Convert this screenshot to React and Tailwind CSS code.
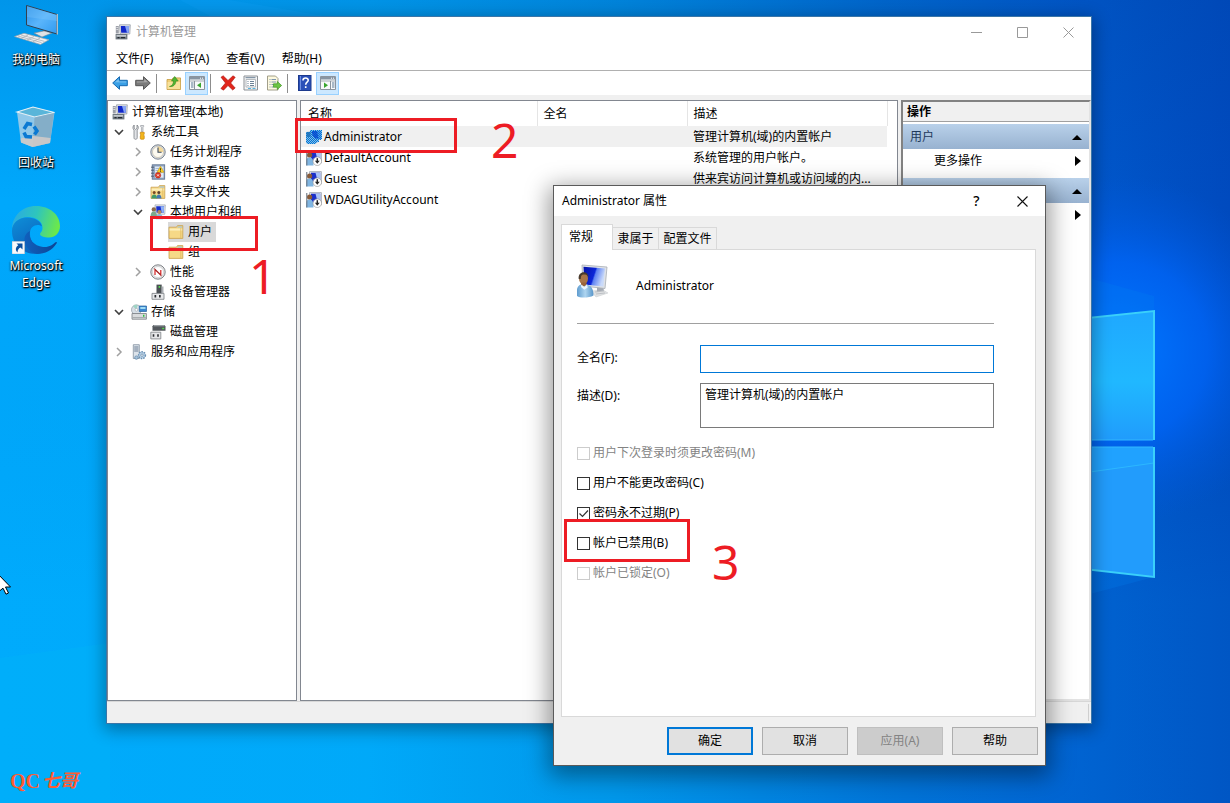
import React from "react";

/* ---------- icons ---------- */

const Svg = ({ size = 16, children, className = "" }) => (
  <svg width={size} height={size} viewBox="0 0 16 16" className={`shrink-0 ${className}`} aria-hidden="true">
    {children}
  </svg>
);

const ComputerIcon = () => (
  <Svg>
    <path d="M4.500 .8h10.800l-.5 9.200H5.200z" fill="#e4e6ea" stroke="#8d939c" strokeWidth=".7" />
    <path d="M5.800 2h8.300l-.4 6.800H6.200z" fill="#1228c8" />
    <path d="M10 2h4.100l-.4 6.800h-1.700z" fill="#86a4f4" />
    <path d="M.8 2h3v7.500h-3z" fill="#9b9fa8" />
    <path d="M1.300 3.500h2M1.300 5.500h2" stroke="#e9eaec" strokeWidth=".8" />
    <path d="M.6 10h11.800v5.400H.6z" fill="#6f7880" />
    <path d="M1.500 11.300h9.500v1.200H1.500z" fill="#e7ebee" />
    <path d="M2.500 13.600h2M6 13.600h4" stroke="#252a30" strokeWidth="1.200" />
  </Svg>
);

const ToolsIcon = () => (
  <Svg>
    <path d="M3.200 1v3.200L4.600 5.500 6 4.200V1c1.600 1 1.900 3.600.2 5.100v7.700c0 2-3.200 2-3.200 0V6.100C1.400 4.600 1.700 2 3.200 1z" fill="#e2e4e7" stroke="#7c8087" strokeWidth=".8" />
    <path d="M9.600 1.500h3v1.200l-.6.800v4.200h-1.600V3.500l-.8-.8z" fill="#dadde0" stroke="#8b8f95" strokeWidth=".6" />
    <path d="M9.300 8.300h3.900v1.800l-.6.800.6 1v2.800c0 .8-3.900.8-3.900 0v-2.800l.6-1-.6-.8z" fill="#f2b61c" stroke="#c98205" strokeWidth=".7" />
  </Svg>
);

const ClockIcon = () => (
  <Svg>
    <circle cx="8" cy="8" r="7.200" fill="#d4dae2" stroke="#7c848e" />
    <circle cx="8" cy="8" r="5.500" fill="#fdfaf0" stroke="#b4a98c" strokeWidth=".5" />
    <path d="M8 2.600A5.400 5.400 0 0 1 13.400 8H8z" fill="#f3d99a" />
    <path d="M8 3.500V8.300h3.600" fill="none" stroke="#39485b" strokeWidth="1.100" />
  </Svg>
);

const EventIcon = () => (
  <Svg>
    <rect x="2.200" y=".8" width="12.500" height="14.400" fill="#91a6c2" stroke="#5a6f8e" strokeWidth=".8" />
    <path d="M5 2.500h8.500v11.200H5z" fill="#dfe9f5" />
    <path d="M5.500 4.500h7M5.500 6.500h7M5.500 8.500h7" stroke="#8ba5c7" strokeWidth=".7" />
    <path d="M1 3.200h3M1 6.200h3M1 9.200h3M1 12.200h3" stroke="#4b5668" strokeWidth=".9" />
    <path d="m10.500 2.300 3.500 6H7z" fill="#ffd21f" stroke="#b88a00" strokeWidth=".5" />
    <path d="M10.500 4.200v2.400M10.500 7v.8" stroke="#222" strokeWidth=".8" />
    <circle cx="8" cy="11.300" r="2.800" fill="#dc3a26" stroke="#a31b0e" strokeWidth=".4" />
    <path d="m7 10.300 2 2m0-2-2 2" stroke="#fff" strokeWidth=".8" />
  </Svg>
);

const FolderShape = () => (
  <>
    <path d="M1 3.200h7.500l1-1.600h5.300v12.800H1z" fill="#f6d987" stroke="#c99f4c" strokeWidth=".8" />
    <path d="M9.800 2.400h4.300v1.200H9.200z" fill="#8ebce8" />
    <path d="M1.600 4.600h12.600v2H1.600z" fill="#fceebb" />
    <path d="M12.800 4v10" stroke="#dfb962" strokeWidth=".8" />
  </>
);

const FolderIcon = () => (
  <Svg>
    <FolderShape />
  </Svg>
);

const SharedIcon = () => (
  <Svg>
    <FolderShape />
    <circle cx="4.200" cy="8.600" r="1.500" fill="#7b4a25" />
    <path d="M1.400 14.400c.2-3 1-4 2.800-4s2.700 1 2.800 4z" fill="#3f9a6a" />
    <circle cx="8.800" cy="8.600" r="1.500" fill="#594130" />
    <path d="M6.500 14.400c.1-3 .7-4 2.300-4s2.500 1 2.700 4z" fill="#4378b3" />
  </Svg>
);

const UsersIcon = () => (
  <Svg>
    <path d="M5 .9h10.300l-.5 9.300H5.400z" fill="#e8ebef" stroke="#9ba2ac" strokeWidth=".7" />
    <path d="M6.200 2.200h7.900l-.4 6.600H6.500z" fill="#1630cf" />
    <path d="M10.500 2.200h3.600l-.4 6.600h-2z" fill="#8fb0f6" />
    <circle cx="3.800" cy="5.400" r="2.200" fill="#8b6a4c" />
    <path d="M.4 13.200c.3-4 1.300-5.600 3.400-5.600s3 1.800 3.400 5.600z" fill="#7ba98c" />
    <circle cx="9.400" cy="8" r="2.100" fill="#b88a5b" />
    <path d="M5.900 15.200c.3-3.600 1.200-5.200 3.500-5.200s3.300 1.600 3.600 5.200z" fill="#86b9dc" />
  </Svg>
);

const PerfIcon = () => (
  <Svg>
    <circle cx="8" cy="8" r="7.200" fill="#e6e6e6" stroke="#7f8388" strokeWidth="1" />
    <circle cx="8" cy="8" r="5.500" fill="#fff" stroke="#b4b7bb" strokeWidth=".5" />
    <path d="M5 11V5.500L10.800 11V6" fill="none" stroke="#d11f1f" strokeWidth="1.200" />
    <path d="m4.300 4.500 6.800 7" stroke="#5d3f42" strokeWidth=".6" />
  </Svg>
);

const DeviceIcon = () => (
  <Svg>
    <path d="M6.500.6h5.200v9H6.500z" fill="#4b5055" />
    <path d="M8.600 2h1.600v1.800H8.600z" fill="#56dd4f" />
    <path d="M2 9.400h12v5.900H2z" fill="#e7e8ea" stroke="#7a7e83" strokeWidth=".8" />
    <path d="M4.500 11h1.700v2.500H4.500zM9 11h1.700v2.500H9z" fill="#2d3034" />
    <path d="M11.700 2.500h1.800v6.500h-1.800z" fill="#abafb4" />
  </Svg>
);

const StorageIcon = () => (
  <Svg>
    <circle cx="5.400" cy="5.800" r="4.900" fill="#d7dfe6" stroke="#8e979f" strokeWidth=".7" />
    <path d="M5.400 5.800 2 2.300A4.900 4.900 0 0 1 6.500 1z" fill="#9fd5c4" />
    <circle cx="5.400" cy="5.800" r="1.400" fill="#fff" stroke="#8e979f" strokeWidth=".5" />
    <path d="M8.300 2h7.200v5.500H8.300z" fill="#3b87cf" stroke="#28629f" strokeWidth=".7" />
    <path d="M9.300 3h5.200v2H9.300z" fill="#9edaf5" />
    <path d="M1 9.500h14.400v5.700H1z" fill="#d9dbdd" stroke="#777b80" strokeWidth=".8" />
    <path d="M1.500 13.500h13.400" stroke="#9da1a5" strokeWidth=".8" />
    <path d="M12 10.700h1.400v2H12z" fill="#2bc23b" />
  </Svg>
);

const DiskIcon = () => (
  <Svg>
    <path d="m2.500 2.300 1-1.300h10.800l1.200 1.500v4.300H2.500z" fill="#53585d" />
    <path d="M3.500 2.300h11.200L14 1.300H4.200z" fill="#b3b8bc" />
    <path d="M12.200 3.800h2v1.400h-2z" fill="#52d94b" />
    <path d="M.8 8.200h10v6.700h-10z" fill="#e5e6e8" stroke="#7b7f84" strokeWidth=".8" />
    <path d="M2.700 10.300h1.600v2.400H2.700zM7.200 10.300h1.600v2.400H7.200z" fill="#2d3034" />
  </Svg>
);

const ServicesIcon = () => (
  <Svg>
    <path d="M2.300.7h6v13.800h-6z" fill="#dce3ea" stroke="#8390a0" strokeWidth=".8" />
    <path d="M3.200 3h4.200M3.200 5h4.200M3.200 7h4.200" stroke="#6d7f95" strokeWidth="1" />
    <circle cx="11" cy="11.200" r="3.400" fill="#b9d2e8" stroke="#6a8fb1" strokeWidth="1.500" strokeDasharray="1.500 1" />
    <circle cx="11" cy="11.200" r="1.200" fill="#fff" stroke="#5a7f9f" strokeWidth=".7" />
    <circle cx="5.400" cy="13.600" r="1.700" fill="#a6c3dc" stroke="#6a8fb1" strokeWidth=".8" />
  </Svg>
);

const UserArrowIcon = () => (
  <Svg>
    <path d="M3.500.6h11.900v12H4z" fill="#e6e9ee" stroke="#8f98a6" strokeWidth=".7" />
    <path d="M5 1.700h9.200v9H5z" fill="#1b2fca" />
    <path d="M9.500 1.700h4.700v9h-2.500z" fill="#a9c2f7" />
    <circle cx="3.600" cy="5" r="2.600" fill="#8a5b38" />
    <path d="M.3 15.400V11c0-2.500 1.400-3.400 3.500-3.400s3.700 1.300 3.700 7.800z" fill="#7fb5e2" />
    <path d="M.3 1h1v14.400h-1z" fill="#5f6a78" />
    <circle cx="11.300" cy="11.200" r="4.300" fill="#fff" stroke="#8c8c8c" strokeWidth=".6" />
    <path d="M11.300 8.200v3.500" stroke="#222" strokeWidth="1.500" />
    <path d="M8.900 10.800h4.800l-2.400 3z" fill="#222" />
  </Svg>
);

const UserSelectedIcon = () => (
  <Svg>
    <defs>
      <pattern id="dither" width="2" height="2" patternUnits="userSpaceOnUse">
        <rect width="1" height="1" fill="#0078d7" />
        <rect x="1" y="1" width="1" height="1" fill="#0078d7" />
      </pattern>
    </defs>
    <path d="M4 1h12v9l-3 1v1.500l-4 2.500H1.500L0 14V3l4-.5z" fill="#85bce8" />
    <path d="M6 2h9v7.500H9L6 5z" fill="#1937cf" />
    <path d="M11 2h4v7.500h-2.500z" fill="#5795ea" />
    <path d="M.5 3h4v5h-4z" fill="#4277a8" />
    <path d="M4 1h12v9l-3 1v1.500l-4 2.500H1.500L0 14V3l4-.5z" fill="url(#dither)" shapeRendering="crispEdges" />
  </Svg>
);

const UserLargeIcon = () => (
  <svg width="32" height="36" viewBox="0 0 32 36" className="shrink-0" aria-hidden="true">
    <defs>
      <linearGradient id="scr" x1="0" x2="1" y1="0" y2=".3">
        <stop offset="0" stopColor="#0412a8" />
        <stop offset=".55" stopColor="#0c26d8" />
        <stop offset=".62" stopColor="#5f82f2" />
        <stop offset="1" stopColor="#c9dafa" />
      </linearGradient>
      <linearGradient id="shirt" x1="0" x2="1">
        <stop offset="0" stopColor="#5f9ccf" />
        <stop offset=".5" stopColor="#aed5f0" />
        <stop offset="1" stopColor="#5795c9" />
      </linearGradient>
    </defs>
    <path d="m14 27 12-1 5 3-12 4z" fill="#dfe1e3" stroke="#c6cacd" strokeWidth=".5" />
    <path d="m18 28 9-1M19 30l9-1" stroke="#aeb2b7" strokeWidth=".7" />
    <path d="m20 22 6 1 1 3.500-7 1z" fill="#a5abb4" />
    <path d="m5 1 25 2-2 21.500L6 22z" fill="#dfe2e7" stroke="#a7adb5" strokeWidth=".8" />
    <path d="m6.500 2.800 21.500 1.800-1.700 17.900L7.500 20.500z" fill="url(#scr)" />
    <ellipse cx="6.500" cy="14.500" rx="4.500" ry="5.700" fill="#a87548" />
    <path d="M1.700 15c-1-8.500 9.800-8.800 9.800-1.500-1-2.500-2.500-3-4.700-3-2 0-3 1-3 4.500z" fill="#493a2d" />
    <path d="M4 18.500h5.500v4H4z" fill="#9a6539" />
    <path d="M0 32v-5.500c0-4 2.500-5.500 4-6l3 2.500 2.600-2.500c4.500 1 6.900 4 6.900 11C12 34 3 34.200 0 32z" fill="url(#shirt)" />
    <path d="m4.300 20.500 3 2.500 2.600-2.500.8 3-3.400 2.300-3.300-2.800z" fill="#eaf5fc" />
  </svg>
);

/* ---------- desktop ---------- */

const PcDesktopIcon = () => (
  <svg width="48" height="48" viewBox="0 0 48 48" aria-hidden="true">
    <defs>
      <linearGradient id="pc" x1="0" x2="1" y1="0" y2="1">
        <stop offset="0" stopColor="#2a8fe6" />
        <stop offset=".5" stopColor="#5bb5fb" />
        <stop offset="1" stopColor="#2f9af0" />
      </linearGradient>
    </defs>
    <path d="m31 31 4-1v4h-5z" fill="#b9bec4" />
    <path d="m22 33 10-2 8 2-10 4z" fill="#dfe3e6" stroke="#7d8790" strokeWidth=".6" />
    <path d="m14.500 5.500 30.500 9V34l-30.500-9z" fill="url(#pc)" stroke="#32404f" strokeWidth="1" />
    <path d="M15 6 45 15v6L15 17z" fill="#7cc6fb" opacity=".35" />
    <path d="M45.300 14V34.500" stroke="#c3c9cf" strokeWidth="1.200" />
    <path d="m2.500 36.500 9.500-3.200 25 6.500-8.500 4.700z" fill="#eef0f2" stroke="#98a1a8" strokeWidth=".7" />
    <path d="m6 36 23.500 6.600M9 35l23.500 6.400M9 38.400l7-3.400M15 40l7-3.500M21 41.700l7-3.600" stroke="#a9b0b6" strokeWidth=".8" />
  </svg>
);

const BinIcon = () => (
  <svg width="48" height="48" viewBox="0 0 48 48" aria-hidden="true">
    <path d="m5 9 16-5 21.500 5.500L38 40l-17.500 4L9 39.500z" fill="#a9cfe6" fillOpacity=".85" />
    <path d="m5 9 16-5 21.500 5.500L22.500 14z" fill="#59b5d9" stroke="#e4eff5" strokeWidth="1.200" />
    <path d="M22.500 14.500 42 10 38 40l-17.500 4z" fill="#83a9c2" fillOpacity=".85" />
    <path d="m8.500 35.500 13-2.500 17 2-.5 5-17.500 4L9 39.500z" fill="#cfcac8" fillOpacity=".9" />
    <g fill="none" stroke="#0b79d2" strokeWidth="3.500">
      <path d="m12 26 3.500-5.500 4.500 1" />
      <path d="m22 23.500 3 4.500-2.500 3.500" />
      <path d="m20 34-6-.5-2-4" />
    </g>
  </svg>
);

const EdgeIcon = () => (
  <svg width="48" height="48" viewBox="0 0 48 48" aria-hidden="true">
    <defs>
      <linearGradient id="e1" x1="0" x2="1" y1=".2" y2=".4">
        <stop offset="0" stopColor="#2aa9e5" />
        <stop offset=".5" stopColor="#2ec5bd" />
        <stop offset="1" stopColor="#6be84c" />
      </linearGradient>
      <linearGradient id="e2" x1="0" x2=".5" y1="0" y2="1">
        <stop offset="0" stopColor="#0e8fd8" />
        <stop offset="1" stopColor="#0b63bd" />
      </linearGradient>
      <linearGradient id="e3" x1="0" x2="1">
        <stop offset="0" stopColor="#1060bd" />
        <stop offset="1" stopColor="#0d4595" />
      </linearGradient>
    </defs>
    <path d="M0 24C0 10 10 0 24 0s24 9 24 20c0 7-5 11.500-11 11.500-5 0-9-1.400-9-3.500 0-1 2.500-2.500 2.500-6C30.500 15 24 11 16 11 8 11 2 16 0 24z" fill="url(#e1)" />
    <path d="M0 25c0-8 6.500-13.500 15-13.500 8.500 0 14 4 15 9-5-3.500-11.500-.5-12 6C17.500 34 22 42 31 46.500 17 51.500 0 42 0 25z" fill="url(#e2)" />
    <path d="M18 25c-2 8 4 15 13 16 6 .6 10-2.500 12-4.500 1.500-1.200 2.300-.3 1.500 1C40.500 44 33 48 25 48c-6-1-12-7-12.500-13.500-.4-4.500 2-8 5.500-9.500z" fill="url(#e3)" />
    <path d="M0 35.500h12.500V48H0z" fill="#f7f9fb" stroke="#b7c5d3" strokeWidth=".8" />
    <path d="m4.500 37.500 6 0v6l-2-2c-2 1-3 2.500-3 5-2.500-2.500-2-5.500.8-7.300z" fill="#0b4f9e" />
  </svg>
);

const DesktopItem = ({ icon, label }) => (
  <button className="flex w-[72px] flex-col items-center gap-[3px] text-xs leading-[17px] text-white [text-shadow:1px_1px_1px_#000,0_1px_2px_#000,1px_0_2px_#00000099]">
    {icon}
    <span>{label}</span>
  </button>
);

const Wallpaper = () => (
  <svg className="absolute inset-0 h-full w-full" viewBox="0 0 1230 803" preserveAspectRatio="none" aria-hidden="true">
    <defs>
      <linearGradient id="base" x1="0" x2="1" y1="0" y2="0">
        <stop offset="0" stopColor="#00a8fc" />
        <stop offset=".3" stopColor="#00a6f8" />
        <stop offset=".5" stopColor="#0092e8" />
        <stop offset=".72" stopColor="#006cd4" />
        <stop offset=".88" stopColor="#0058cc" />
        <stop offset="1" stopColor="#004abe" />
      </linearGradient>
      <linearGradient id="shade" x1="0" x2="0" y1="0" y2="1">
        <stop offset="0" stopColor="#004098" stopOpacity=".18" />
        <stop offset=".25" stopColor="#004098" stopOpacity="0" />
        <stop offset=".75" stopColor="#00c4ff" stopOpacity=".1" />
        <stop offset="1" stopColor="#00c4ff" stopOpacity=".1" />
      </linearGradient>
      <radialGradient id="glow" gradientUnits="userSpaceOnUse" cx="1120" cy="350" r="175">
        <stop offset="0" stopColor="#0078ff" />
        <stop offset=".5" stopColor="#0068ff" stopOpacity=".7" />
        <stop offset="1" stopColor="#0058e0" stopOpacity="0" />
      </radialGradient>
      <linearGradient id="pane" x1="0" x2="0" y1="0" y2="1">
        <stop offset="0" stopColor="#1fa8ff" />
        <stop offset=".55" stopColor="#20b8ff" />
        <stop offset="1" stopColor="#209cfc" />
      </linearGradient>
    </defs>
    <rect width="1230" height="803" fill="url(#base)" />
    <rect width="1230" height="803" fill="url(#shade)" />
    <path d="M230 0 700 80H330L180 0z" fill="#20a8ff" opacity=".15" />
    <path d="M0 658 110 643V803H0z" fill="#00b4f8" opacity=".4" />
    <rect x="900" y="130" width="330" height="440" fill="url(#glow)" />
    <path d="m1060 270 94 26v14l-94 10zM1060 550l94 27-94 25z" fill="#0080f0" opacity=".25" />
    <path d="M1040 323 1154 311V440H1040z" fill="url(#pane)" />
    <path d="M1040 447h114v130l-114-13z" fill="#229cfc" />
    <path d="m1040 479 114-16v-16h-114z" fill="#20a2ff" />
    <path d="m1040 479 114-16" stroke="#2cb8ff" />
    <path d="m1040 323 114-12v129M1154 447v130l-114-13" fill="none" stroke="#3ad0fa" strokeWidth="2" />
    <path d="M1040 440h113M1040 447h113" stroke="#30b8ff" />
  </svg>
);

/* ---------- main window ---------- */

const Chevron = ({ open }) => (
  <button className="flex h-4 w-4 shrink-0 items-center justify-center" aria-label={open ? "折叠" : "展开"}>
    <svg width="10" height="10" viewBox="0 0 10 10" aria-hidden="true">
      {open ? (
        <path d="m1 3 4 4 4-4" fill="none" stroke="#404040" strokeWidth="1.600" />
      ) : (
        <path d="m3 1 4 4-4 4" fill="none" stroke="#a0a0a0" strokeWidth="1.500" />
      )}
    </svg>
  </button>
);

const indents = ["pl-1", "pl-[3px]", "pl-[22px]", "pl-10"];

const treeRows = [
  { level: 0, icon: <ComputerIcon />, text: "计算机管理(本地)", root: true },
  { level: 1, icon: <ToolsIcon />, text: "系统工具", open: true },
  { level: 2, icon: <ClockIcon />, text: "任务计划程序", open: false },
  { level: 2, icon: <EventIcon />, text: "事件查看器", open: false },
  { level: 2, icon: <SharedIcon />, text: "共享文件夹", open: false },
  { level: 2, icon: <UsersIcon />, text: "本地用户和组", open: true },
  { level: 3, icon: <FolderIcon />, text: "用户", selected: true },
  { level: 3, icon: <FolderIcon />, text: "组" },
  { level: 2, icon: <PerfIcon />, text: "性能", open: false },
  { level: 2, icon: <DeviceIcon />, text: "设备管理器" },
  { level: 1, icon: <StorageIcon />, text: "存储", open: true },
  { level: 2, icon: <DiskIcon />, text: "磁盘管理" },
  { level: 1, icon: <ServicesIcon />, text: "服务和应用程序", open: false },
];

const Tree = () => (
  <ul role="tree" className="w-[190px] shrink-0 border border-[#828790] bg-white pt-px">
    {treeRows.map((row) => (
      <li
        key={row.text}
        role="treeitem"
        aria-selected={Boolean(row.selected)}
        className={`flex h-5 items-center ${indents[row.level]}`}
      >
        {row.open !== undefined && <Chevron open={row.open} />}
        {row.open === undefined && !row.root && <span className="w-4 shrink-0" />}
        <span className={`flex h-5 items-center gap-1 pr-1 ${row.root ? "" : "ml-1"} ${row.selected ? "bg-[#d9d9d9]" : ""}`}>
          {row.icon}
          <span className="whitespace-nowrap">{row.text}</span>
        </span>
      </li>
    ))}
  </ul>
);

const accounts = [
  { name: "Administrator", desc: "管理计算机(域)的内置帐户", selected: true },
  { name: "DefaultAccount", desc: "系统管理的用户帐户。" },
  { name: "Guest", desc: "供来宾访问计算机或访问域的内..." },
  { name: "WDAGUtilityAccount", desc: "" },
];

const AccountList = () => (
  <div className="min-w-0 flex-1 border border-[#828790] bg-white">
    <table className="w-[586px] table-fixed border-collapse text-left">
      <thead>
        <tr className="h-[25px]">
          <th className="w-[236px] border-r border-[#e5e5e5] pl-[7px] font-normal">名称</th>
          <th className="w-[150px] border-r border-[#e5e5e5] pl-[6px] font-normal">全名</th>
          <th className="w-[200px] border-r border-[#e5e5e5] pl-[6px] font-normal">描述</th>
        </tr>
      </thead>
      <tbody>
        {accounts.map((a) => (
          <tr key={a.name} className={`h-[21px] ${a.selected ? "bg-[#f0f0f0]" : ""}`}>
            <td className="p-0 pl-[5px]">
              <span className="flex items-center gap-[2px]">
                {a.selected ? <UserSelectedIcon /> : <UserArrowIcon />}
                {a.name}
              </span>
            </td>
            <td className="p-0" />
            <td className="whitespace-nowrap p-0 pl-[6px]">{a.desc}</td>
          </tr>
        ))}
      </tbody>
    </table>
  </div>
);

const Triangle = ({ dir }) => (
  <svg width="10" height="10" viewBox="0 0 10 10" aria-hidden="true">
    {dir === "up" ? <path d="m0 8 5-5 5 5z" fill="#000" /> : <path d="m2 0 6 5-6 5z" fill="#000" />}
  </svg>
);

const ActionHeading = ({ children }) => (
  <button className="flex h-[25px] w-full items-center justify-between bg-linear-to-b from-[#b9d1ea] to-[#98b2d0] pl-[7px] pr-[7px] text-[#1e395b]">
    {children}
    <Triangle dir="up" />
  </button>
);

const ActionLink = () => (
  <button className="flex h-[23px] w-full items-center justify-between pl-[31px] pr-[6px]">
    更多操作
    <Triangle dir="right" />
  </button>
);

const Actions = () => (
  <aside className="flex w-[190px] shrink-0 flex-col border-2 border-r-[#e3e3e3] border-b-[#e3e3e3] border-l-[#828282] border-t-[#828282] bg-white">
    <h2 className="h-5 border-b border-[#a0a0a0] bg-[#f0f0f0] pl-1 font-bold leading-[20px]">操作</h2>
    <div className="mt-[2px] flex flex-col">
      <ActionHeading>用户</ActionHeading>
      <ActionLink />
      <div className="mt-[6px]">
        <ActionHeading>Administrator</ActionHeading>
        <ActionLink />
      </div>
    </div>
  </aside>
);

const ToolButton = ({ label, active, children }) => (
  <button
    aria-label={label}
    className={`flex h-[23px] w-[23px] items-center justify-center ${active ? "border border-[#99d1ff] bg-[#cce8ff]" : ""}`}
  >
    {children}
  </button>
);

const Divider = () => <span className="ml-[2px] mr-[5px] h-[19px] w-px bg-[#8d8d8d]" />;

const Arrow = ({ flip, fill, stroke }) => (
  <Svg className={flip ? "-scale-x-100" : ""}>
    <path d="M.7 8 7.500 1.700v3.600h7.800v5.400H7.500v3.600z" fill={fill} stroke={stroke} strokeWidth="1" />
    <path d="M3 7.300 6.800 4v2.500h7.400v1z" fill="#fff" opacity=".35" />
  </Svg>
);

const PaneIcon = ({ right }) => (
  <Svg>
    <path d="M.5 1.500h15v13H.5z" fill="#f7f9fa" stroke="#8b949d" />
    <path d="M1 2h14v2.500H1z" fill="#8795a3" />
    <path d="M11 3.200h1M13 3.200h1" stroke="#fff" />
    <path d="M1 6h14" stroke="#a5adb5" />
    {right ? (
      <>
        <path d="M10.500 6v8" stroke="#8b949d" />
        <path d="M12 8h2.500M12 10h2.500M12 12h2.500" stroke="#5b7894" />
        <path d="m4 7.500 4 2.700-4 2.700z" fill="#3aa62e" />
      </>
    ) : (
      <>
        <path d="M5.500 6v8" stroke="#8b949d" />
        <path d="M2 8h2.500M2 10h2.500M2 12h2.500" stroke="#5b7894" />
        <path d="m12 7.500-4 2.700 4 2.700z" fill="#3aa62e" />
      </>
    )}
  </Svg>
);

const Toolbar = () => (
  <div className="flex h-[25px] items-center border-t border-[#b0b0b0] bg-white pl-px">
    <ToolButton label="后退"><Arrow fill="#3aa0e6" stroke="#1769b0" /></ToolButton>
    <ToolButton label="前进"><Arrow flip fill="#7b7b7b" stroke="#565656" /></ToolButton>
    <Divider />
    <ToolButton label="上一级">
      <Svg>
        <path d="M1 4.500h5l1-1.600h7.500v11.600H1z" fill="#f0cf78" stroke="#c59a3e" strokeWidth=".8" />
        <path d="M1.500 7h12.600v7H1.500z" fill="#f8e19a" />
        <path d="M3.500 11.500c2.500-.5 4-2.500 4.100-5.500H5.500L8.700 1.500l3.500 4.500H9.900c-.2 3.500-2.500 6-6.400 5.500z" fill="#51b532" stroke="#2f8a1c" strokeWidth=".6" />
      </Svg>
    </ToolButton>
    <ToolButton label="显示/隐藏控制台树" active><PaneIcon /></ToolButton>
    <Divider />
    <ToolButton label="删除">
      <Svg>
        <path d="M1 2.200 3.200.8 8 5.500 13 .8l2.200 1.500L10.700 8l4.500 5-2.500 2L8 10.500 3.500 15.200.9 13.500 5.500 8z" fill="#e1261c" stroke="#a81410" strokeWidth=".6" />
      </Svg>
    </ToolButton>
    <ToolButton label="属性">
      <Svg>
        <path d="M1 1h13.500v14H1z" fill="#f4f5f6" stroke="#8d9296" />
        <path d="M3 4.500h9.500v7.500H3z" fill="#fff" stroke="#a6abb0" strokeWidth=".8" />
        <path d="M2.500 2.700h10M4.500 6.500h1M7 6.500h4M4.500 8.500h1M7 8.500h4M4.500 10.500h1M7 10.500h4" stroke="#6c8296" />
        <path d="M5 13.500h3M9.500 13.500h3" stroke="#58b4df" />
      </Svg>
    </ToolButton>
    <ToolButton label="导出列表">
      <Svg>
        <path d="M1.500 1h8l2.500 2.500V15H1.500z" fill="#fdf9df" stroke="#97947f" strokeWidth=".9" />
        <path d="M3.500 4.500h1M5.500 4.500h4.500M3.500 7h1M5.500 7h4.500M3.500 9.500h1M5.500 9.500h2M3.500 12h1M5.500 12h2" stroke="#7d96ae" />
        <path d="M7.500 8.800h3.800V6.500l4.300 4-4.300 4v-2.300H7.500z" fill="#6cc644" stroke="#3f9423" strokeWidth=".7" />
      </Svg>
    </ToolButton>
    <Divider />
    <ToolButton label="帮助">
      <Svg>
        <rect x="1.500" y=".5" width="12.500" height="15" fill="#2b50b8" stroke="#1d3a8d" />
        <path d="M3.500 1v14" stroke="#6f8fe0" />
        <path d="M6 5.500c0-3.400 5.400-3.200 5.200-.2C11.100 7.300 8.700 7.200 8.700 9.800M8.700 11.300v1.800" fill="none" stroke="#fff" strokeWidth="1.600" />
      </Svg>
    </ToolButton>
    <ToolButton label="显示/隐藏操作窗格" active><PaneIcon right /></ToolButton>
  </div>
);

const ManagementWindow = () => (
  <section
    aria-label="计算机管理"
    className="absolute left-[106px] top-4 flex h-[708px] w-[986px] flex-col border border-[#3b76a8] bg-[#f0f0f0] shadow-[0_4px_16px_2px_#00000055]"
  >
    <header className="flex h-[30px] items-center bg-white pl-2">
      <ComputerIcon />
      <h1 className="flex-1 pl-[5px] text-[#999]">计算机管理</h1>
      <button className="flex h-full w-[46px] items-center justify-center" aria-label="最小化">
        <svg width="11" height="11" viewBox="0 0 11 11"><path d="M0 5.500h11" stroke="#999" /></svg>
      </button>
      <button className="flex h-full w-[46px] items-center justify-center" aria-label="最大化">
        <svg width="11" height="11" viewBox="0 0 11 11"><path d="M.5.5h10v10H.5z" fill="none" stroke="#999" /></svg>
      </button>
      <button className="flex h-full w-[46px] items-center justify-center" aria-label="关闭">
        <svg width="11" height="11" viewBox="0 0 11 11"><path d="m.5.5 10 10m0-10-10 10" stroke="#999" /></svg>
      </button>
    </header>
    <nav className="flex h-[23px] items-center gap-[17px] bg-white pl-[9px]">
      <button>文件(F)</button>
      <button>操作(A)</button>
      <button>查看(V)</button>
      <button>帮助(H)</button>
    </nav>
    <Toolbar />
    <div className="mt-[5px] flex min-h-0 flex-1 gap-[3px]">
      <Tree />
      <AccountList />
      <Actions />
    </div>
    <footer className="flex h-[22px] justify-end border-t border-[#d7d7d7] py-[2px] pr-[2px]">
      <span className="w-px bg-[#cfcfcf]" />
    </footer>
  </section>
);

/* ---------- dialog ---------- */

const options = [
  { id: "must-change", text: "用户下次登录时须更改密码(M)", disabled: true },
  { id: "no-change", text: "用户不能更改密码(C)" },
  { id: "never-expires", text: "密码永不过期(P)", checked: true },
  { id: "account-off", text: "帐户已禁用(B)" },
  { id: "account-locked", text: "帐户已锁定(O)", disabled: true },
];

const CheckRow = ({ id, text, disabled, checked }) => (
  <div className="flex h-[30px] items-center gap-[3px]">
    <span className="grid h-[13px] w-[13px] shrink-0">
      <input
        id={id}
        type="checkbox"
        defaultChecked={checked}
        disabled={disabled}
        className="peer col-start-1 row-start-1 h-[13px] w-[13px] appearance-none border border-[#333] bg-white disabled:border-[#ccc]"
      />
      <svg
        viewBox="0 0 13 13"
        className="pointer-events-none invisible col-start-1 row-start-1 h-[13px] w-[13px] peer-checked:visible"
        aria-hidden="true"
      >
        <path d="m2.500 6.500 3 3 5.500-6" fill="none" stroke="#333" strokeWidth="1.200" />
      </svg>
    </span>
    <label htmlFor={id} className={disabled ? "text-[#838383]" : ""}>{text}</label>
  </div>
);

const PropertiesDialog = () => (
  <section
    role="dialog"
    aria-label="Administrator 属性"
    className="absolute left-[553px] top-[185px] flex h-[581px] w-[493px] flex-col border border-[#5a5a5a] bg-[#f0f0f0] shadow-[0_6px_22px_4px_#00000066]"
  >
    <header className="flex h-[30px] items-center bg-white pl-2">
      <h2 className="flex-1">Administrator 属性</h2>
      <button className="h-full w-[45px] text-sm font-medium" aria-label="帮助主题">?</button>
      <button className="flex h-full w-[46px] items-center justify-center" aria-label="关闭">
        <svg width="11" height="11" viewBox="0 0 11 11"><path d="m.5.5 10 10m0-10-10 10" stroke="#111" strokeWidth="1.100" /></svg>
      </button>
    </header>
    <div className="flex min-h-0 flex-1 flex-col px-[7px] pb-[10px] pt-2">
      <div role="tablist" className="flex items-end">
        <button role="tab" aria-selected="true" className="z-10 -mb-px h-[26px] w-[52px] border border-b-0 border-[#d9d9d9] bg-white pb-[2px] pr-3">
          常规
        </button>
        <button role="tab" aria-selected="false" className="h-[22px] w-[46px] border border-b-0 border-l-0 border-[#d9d9d9]">隶属于</button>
        <button role="tab" aria-selected="false" className="h-[22px] w-[58px] border border-b-0 border-l-0 border-[#d9d9d9]">配置文件</button>
      </div>
      <div role="tabpanel" className="mr-[2px] flex-1 border border-[#d9d9d9] bg-white pl-[15px] pr-[41px] pt-[14px]">
        <div className="flex h-[60px] items-start gap-[27px] border-b border-[#a0a0a0] pb-6">
          <UserLargeIcon />
          <span className="pt-[14px] leading-4">Administrator</span>
        </div>
        <div className="mt-[21px] flex">
          <label htmlFor="full-name" className="w-[123px] shrink-0 leading-[26px]">全名(F):</label>
          <input id="full-name" type="text" className="h-7 min-w-0 flex-1 border border-[#0078d7] px-1 outline-none" />
        </div>
        <div className="mt-[10px] flex">
          <label htmlFor="description" className="w-[123px] shrink-0 leading-[26px]">描述(D):</label>
          <textarea
            id="description"
            defaultValue="管理计算机(域)的内置帐户"
            className="h-[45px] min-w-0 flex-1 resize-none border border-[#7a7a7a] px-1 pt-[3px] outline-none"
          />
        </div>
        <div className="mt-[10px]">
          {options.map((o) => (
            <CheckRow key={o.id} {...o} />
          ))}
        </div>
      </div>
      <div className="mt-[10px] flex justify-end gap-[9px]">
        <button className="h-7 w-[86px] border-2 border-[#0078d7] bg-[#e1e1e1]">确定</button>
        <button className="h-7 w-[86px] border border-[#adadad] bg-[#e1e1e1]">取消</button>
        <button disabled className="h-7 w-[86px] border border-[#bfbfbf] bg-[#ccc] text-[#838383]">应用(A)</button>
        <button className="h-7 w-[86px] border border-[#adadad] bg-[#e1e1e1]">帮助</button>
      </div>
    </div>
  </section>
);

export default function App() {
  return (
    <main className="relative min-h-screen overflow-hidden bg-[#00a4f8] font-['Noto_Sans','Noto_Sans_CJK_SC',sans-serif] text-xs text-black">
      <Wallpaper />

      <div className="relative flex w-[72px] flex-col gap-[35px]">
        <DesktopItem icon={<PcDesktopIcon />} label="我的电脑" />
        <DesktopItem icon={<BinIcon />} label="回收站" />
        <DesktopItem icon={<EdgeIcon />} label="Microsoft Edge" />
      </div>

      <ManagementWindow />
      <PropertiesDialog />

      {/* step markers */}
      <div className="absolute left-[150px] top-[216px] h-[35px] w-[108px] border-3 border-[#ed1c24]" />
      <div className="absolute left-[295px] top-[118px] h-[35px] w-[162px] border-3 border-[#ed1c24]" />
      <div className="absolute left-[564px] top-[519px] h-[43px] w-[126px] border-3 border-[#ed1c24]" />
      <span className="absolute left-[249px] top-[252px] text-5xl leading-none text-[#ed1c24]">1</span>
      <span className="absolute left-[491px] top-[116px] text-5xl leading-none text-[#ed1c24]">2</span>
      <span className="absolute left-[712px] top-[538px] text-5xl leading-none text-[#ed1c24]">3</span>

      <span className="absolute bottom-2 left-[10px] flex items-center gap-[2px] font-['Liberation_Serif','Noto_Sans_CJK_SC',serif] text-xl font-bold leading-7 text-[#ff5c33]">
        QC<i className="text-lg leading-7">七哥</i>
      </span>

      <svg className="absolute left-0 top-[575px]" width="12" height="20" viewBox="0 0 12 20" aria-hidden="true">
        <path d="M-4-3 10.500 12H5.500l3 6-2.500 1.200-3-6L-.5 16z" fill="#fff" stroke="#000" />
      </svg>
    </main>
  );
}
